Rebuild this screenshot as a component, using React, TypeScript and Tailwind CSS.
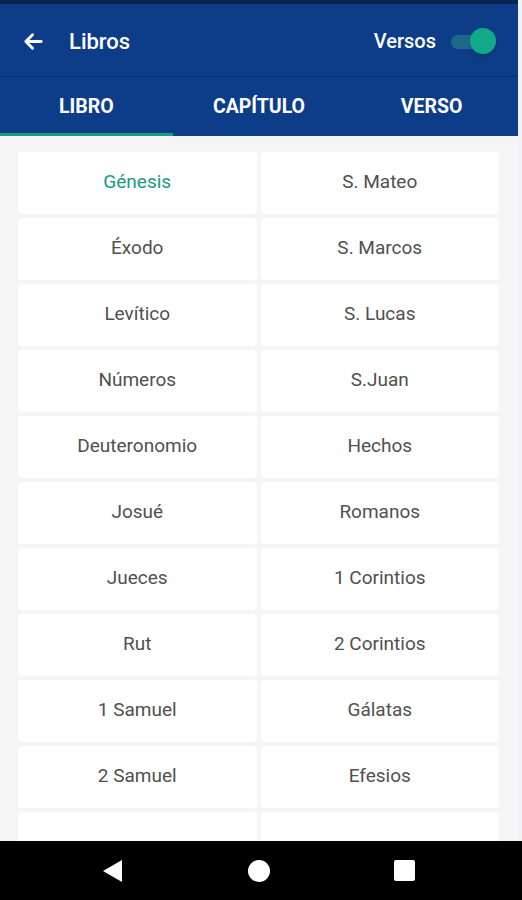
const left = ['Génesis', 'Éxodo', 'Levítico', 'Números', 'Deuteronomio', 'Josué', 'Jueces', 'Rut', '1 Samuel', '2 Samuel', '']
const right = ['S. Mateo', 'S. Marcos', 'S. Lucas', 'S.Juan', 'Hechos', 'Romanos', '1 Corintios', '2 Corintios', 'Gálatas', 'Efesios', '']

export default function App() {
  return (
    <div className="flex h-[900px] w-[522px] flex-col overflow-hidden bg-white font-['Roboto',sans-serif]">
      <div className="flex min-h-0 flex-1">
        <div className="flex min-w-0 flex-1 flex-col">
          <div className="h-[4px] bg-[#0a2450]" />
          <header className="flex h-[72px] items-center bg-[#0d3d88] pl-[22px] pr-[28px] pt-[2px] text-white">
            <svg width="23" height="23" viewBox="0 0 24 24" fill="none" stroke="white" strokeWidth="3" strokeLinecap="round" strokeLinejoin="round">
              <path d="M20 12H4M11 5l-7 7 7 7" />
            </svg>
            <span className="ml-[24px] text-[22px] font-medium">Libros</span>
            <span className="ml-auto text-[20px] font-medium">Versos</span>
            <div className="relative ml-[14px] h-[22px] w-[40px]">
              <div className="absolute left-[1px] top-[5px] h-[14px] w-[34px] rounded-full bg-[#1c6a88]" />
              <div className="absolute right-[-6px] top-[-2px] h-[26px] w-[26px] rounded-full bg-[#12a88a] shadow-md" />
            </div>
          </header>
          <div className="h-px bg-[#0a2f6a]" />
          <nav className="grid h-[59px] grid-cols-3 bg-[#0d3d88] text-[19.5px] font-bold text-white">
            <div className="flex flex-col">
              <div className="flex flex-1 items-center justify-center pt-[3px]">LIBRO</div>
              <div className="h-[3px] bg-[#169e85]" />
            </div>
            <div className="flex items-center justify-center">CAPÍTULO</div>
            <div className="flex items-center justify-center">VERSO</div>
          </nav>
          <main className="min-h-0 flex-1 overflow-hidden bg-[#f5f5f5] pl-[18px] pr-[19px] pt-[16px]">
            <div className="grid grid-cols-2 gap-x-[4px] gap-y-[4px]">
              {left.map((name, i) => (
                <div key={i} className="contents">
                  <div className={`flex h-[62px] items-center justify-center rounded-sm bg-white pb-px text-[19px] ${i === 0 ? 'text-[#179b80]' : 'text-[#505050]'}`}>
                    {name}
                  </div>
                  <div className="flex h-[62px] items-center justify-center rounded-sm bg-white pb-px text-[19px] text-[#505050]">
                    {right[i]}
                  </div>
                </div>
              ))}
            </div>
          </main>
        </div>
        <div className="w-[4px] bg-[#f3f3f7]" />
      </div>
      <div className="flex h-[59px] items-center justify-between bg-black pl-[102px] pr-[107px]">
        <svg width="21" height="24" viewBox="0 0 21 24"><path d="M20 1v22L1 12z" fill="white" /></svg>
        <div className="h-[22px] w-[22px] rounded-full bg-white" />
        <div className="h-[21px] w-[21px] rounded-[2px] bg-white" />
      </div>
    </div>
  )
}
